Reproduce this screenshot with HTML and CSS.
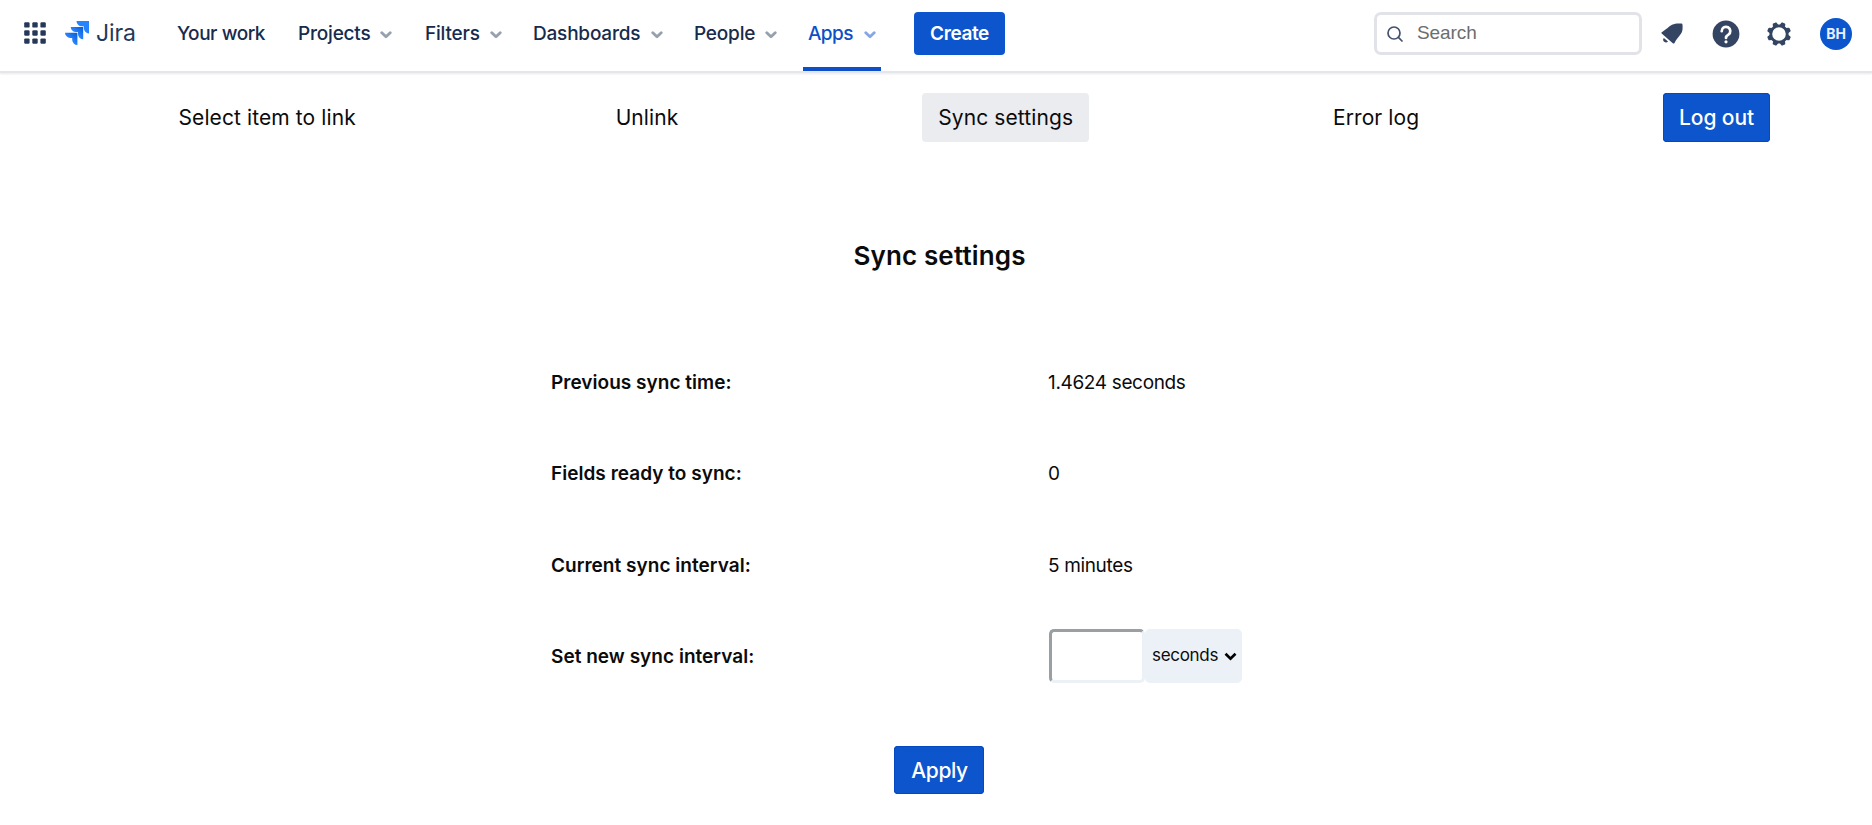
FILE: index.html
```html
<!DOCTYPE html>
<html lang="en">
<head>
<meta charset="utf-8">
<title>Sync settings - Jira</title>
<link rel="stylesheet" href="styles.css">
</head>
<body>
<svg class="defs" width="0" height="0" aria-hidden="true">
  <symbol id="chevron" viewBox="0 0 12 8"><path d="M1.8 1.8 6 5.7l4.200-3.900" fill="none" stroke="currentColor" stroke-width="2.900" stroke-linecap="round" stroke-linejoin="round"/></symbol>
</svg>
<header class="topbar">
  <svg class="switcher" viewBox="0 0 22 22" fill="#253858"><rect x=".2" y=".2" width="5.4" height="5.4" rx="1.2"/><rect x="8.3" y=".2" width="5.4" height="5.4" rx="1.2"/><rect x="16.4" y=".2" width="5.4" height="5.4" rx="1.2"/><rect x=".2" y="8.3" width="5.4" height="5.4" rx="1.2"/><rect x="8.3" y="8.3" width="5.4" height="5.4" rx="1.2"/><rect x="16.4" y="8.3" width="5.4" height="5.4" rx="1.2"/><rect x=".2" y="16.4" width="5.4" height="5.4" rx="1.2"/><rect x="8.3" y="16.4" width="5.4" height="5.4" rx="1.2"/><rect x="16.4" y="16.4" width="5.4" height="5.4" rx="1.2"/></svg>
  <svg class="logo" viewBox="0 0 24 24">
    <defs><linearGradient id="g" x1="1" y1="0" x2=".4" y2=".6"><stop offset=".15" stop-color="#0f60d8"/><stop offset=".9" stop-color="#2684ff"/></linearGradient></defs>
    <path d="M11.500 0H24v12.400a5.300 5.300 0 0 1-5.200-5.300V5.200h-2.100A5.300 5.300 0 0 1 11.500 0z" fill="#2684ff"/>
    <path d="M5.700 5.900h12.500v12.400a5.300 5.300 0 0 1-5.200-5.300v-1.900h-2.100a5.300 5.300 0 0 1-5.200-5.200z" fill="url(#g)"/>
    <path d="M0 11.700h12.400V24a5.300 5.300 0 0 1-5.200-5.200v-1.900H5.200A5.300 5.300 0 0 1 0 11.700z" fill="url(#g)"/>
  </svg>
  <span class="brand">Jira</span>
  <nav class="nav">
    <a class="nav-item your-work">Your work</a>
    <a class="nav-item projects">Projects<svg><use href="#chevron"/></svg></a>
    <a class="nav-item filters">Filters<svg><use href="#chevron"/></svg></a>
    <a class="nav-item dashboards">Dashboards<svg><use href="#chevron"/></svg></a>
    <a class="nav-item people">People<svg><use href="#chevron"/></svg></a>
    <a class="nav-item apps">Apps<svg><use href="#chevron"/></svg></a>
  </nav>
  <button class="create">Create</button>
  <div class="tools">
    <div class="search"><svg viewBox="0 0 16 16" fill="none" stroke="#42526e" stroke-width="1.7" stroke-linecap="round"><circle cx="7" cy="7" r="6"/><path d="m11.4 11.4 3.6 3.6"/></svg><span>Search</span></div>
    <svg class="bell" viewBox="0 0 22 22" fill="#344563"><path d="M1.2 8.9C5 6.8 7.6 3.7 11 1.8 14 .3 17.500 .4 20.300 .6q1.200.1 1.200 1.200c.2 3 .3 6-1.400 8.800-2 3.100-4.800 5.500-6.600 9.300q-.6 1.200-1.700.3L.7 10.500q-1-.9.500-1.600z"/><path d="M2.900 14.900 7 18.400a2.600 2.600 0 0 1-4.100-3.500z"/></svg>
    <svg class="help" viewBox="0 0 28 28"><circle cx="14" cy="14" r="13.400" fill="#344563"/><path d="M9.700 11.200a4.300 4.300 0 1 1 6.700 3.500c-1.600 1-2.400 1.500-2.400 3.200" fill="none" stroke="#fff" stroke-width="2.700" stroke-linecap="round"/><circle cx="14" cy="21.800" r="1.600" fill="#fff"/></svg>
    <svg class="gear" viewBox="-12 -12 24 24"><circle r="8.200" fill="none" stroke="#344563" stroke-width="2.800"/><g fill="#344563"><path id="t" d="M-2.900-8.500-2.100-11.400q.2-.6.800-.6h2.600q.600 0 .8.600l.8 2.900z" transform="rotate(22.500)"/><use href="#t" transform="rotate(45)"/><use href="#t" transform="rotate(90)"/><use href="#t" transform="rotate(135)"/><use href="#t" transform="rotate(180)"/><use href="#t" transform="rotate(225)"/><use href="#t" transform="rotate(270)"/><use href="#t" transform="rotate(315)"/></g></svg>
    <span class="avatar">BH</span>
  </div>
</header>
<main>
  <nav class="tabs">
    <a class="tab">Select item to link</a>
    <a class="tab">Unlink</a>
    <a class="tab selected">Sync settings</a>
    <a class="tab">Error log</a>
    <button class="tab primary">Log out</button>
  </nav>
  <h1>Sync settings</h1>
  <dl class="settings">
    <dt>Previous sync time:</dt><dd>1.4624 seconds</dd>
    <dt>Fields ready to sync:</dt><dd>0</dd>
    <dt>Current sync interval:</dt><dd>5 minutes</dd>
    <dt>Set new sync interval:</dt>
    <dd><input class="interval" type="text" aria-label="Interval"><span class="unit">seconds<svg viewBox="0 0 13 9"><path d="m1.500 1.700 5 4.900 5-4.900" fill="none" stroke="#000" stroke-width="2.700"/></svg></span></dd>
  </dl>
  <button class="primary apply">Apply</button>
</main>
</body>
</html>
```
FILE: styles.css
```css
* { box-sizing: border-box; }
body { margin: 0; background: #fff; color: #0b0b0c; font-family: Inter, sans-serif; }
button { border: 0; font-family: inherit; }
svg { display: block; flex: none; }
.defs { position: absolute; }

.topbar { display: flex; align-items: center; height: 73px; padding: 0 20px 15px 24px; border-bottom: 2px solid #e4e6ea; box-shadow: 0 1px 2px rgba(9, 30, 66, .1); }
.switcher { width: 22px; height: 22px; margin-top: 10px; }
.logo { width: 24px; height: 24px; margin: 10px 0 0 19px; }
.brand { width: 80px; margin: 10px 0 0 7px; color: #253858; font-size: 23px; line-height: 28px; letter-spacing: -.1px; }
.nav { display: flex; align-self: flex-start; height: 71px; color: #172b4d; font-size: 19px; font-weight: 500; letter-spacing: -.2px; }
.nav-item { display: flex; align-items: center; justify-content: space-between; height: 71px; padding: 0 5px 4px; white-space: nowrap; }
.nav-item svg { width: 12px; height: 8px; margin-top: 2px; color: #97a0af; }
.your-work { width: 120px; padding-left: 1px; letter-spacing: -.45px; }
.projects { width: 104px; margin-left: -3px; }
.filters { width: 87px; margin-left: 23px; }
.dashboards { width: 140px; margin-left: 21px; }
.people { width: 93px; margin-left: 21px; }
.apps { width: 78px; margin-left: 21px; border-bottom: 4px solid #0c4fc7; padding-bottom: 0; color: #0c4fc7; letter-spacing: -.6px; }
.apps svg { color: #85a7e3; }
.create { align-self: flex-start; width: 91px; height: 43px; margin: 12px 0 0 33px; padding: 0; border-radius: 4px; background: #0c55cc; color: #fff; font-size: 19px; font-weight: 600; letter-spacing: -.4px; }
.tools { display: flex; align-items: center; align-self: flex-start; height: 67px; margin-left: auto; }
.search { display: flex; align-items: center; width: 268px; height: 43px; padding: 0 10px; border: 3px solid #e1e3e8; border-radius: 7px; color: #6d6d6d; font: 19px "Liberation Sans", sans-serif; letter-spacing: -.1px; }
.search svg { width: 16px; height: 16px; margin-right: 14px; }
.search span { margin-top: -2px; }
.bell { width: 22px; height: 22px; margin-left: 19px; }
.help { width: 28px; height: 28px; margin-left: 29px; }
.gear { width: 24px; height: 24px; margin-left: 27px; }
.avatar { width: 32px; height: 32px; margin-left: 29px; border-radius: 50%; background: #0c55cc; color: #e9f0fd; font-size: 14px; font-weight: 700; line-height: 32px; text-align: center; }

.tabs { display: flex; justify-content: space-between; margin: 20px 102px 0 162.500px; }
.tab { height: 49px; padding: 0 16px; border-radius: 4px; color: #0b0b0c; font-size: 21px; line-height: 49px; letter-spacing: .1px; }
.selected { background: #ebecf0; }
.primary { background: #0c55cc; color: #fff; font-weight: 500; letter-spacing: -.1px; box-shadow: inset 0 0 0 1px #0647c2; }
h1 { margin: 97px 0 0 7px; font-size: 26px; font-weight: 600; line-height: 34px; letter-spacing: .15px; text-align: center; }
.settings { display: grid; grid-template-columns: 497px 400px; grid-auto-rows: 91.300px; align-items: center; margin: 64px 0 0 551px; font-size: 19px; }
dt { font-weight: 600; letter-spacing: .03px; }
dd { display: flex; margin: 0; letter-spacing: -.35px; }
.interval { width: 96px; height: 54px; margin: -2px 0 0 1px; border: 3px solid; border-color: #999fa2 #ebf1f6 #ebf1f6 #999fa2; border-radius: 5px; background: #fff; }
.unit { display: flex; align-items: center; justify-content: space-between; width: 97px; height: 54px; margin-top: -2px; padding: 0 5px 2px 7px; border-radius: 5px; background: #ebf1f6; font-size: 17px; letter-spacing: -.3px; }
.unit svg { width: 13px; height: 9px; margin-top: 3px; }
.apply { display: block; width: 90px; height: 48px; margin: 44px 0 0 894px; padding: 0 0 0 1px; border-radius: 4px; font-size: 21px; letter-spacing: -.4px; }
```
